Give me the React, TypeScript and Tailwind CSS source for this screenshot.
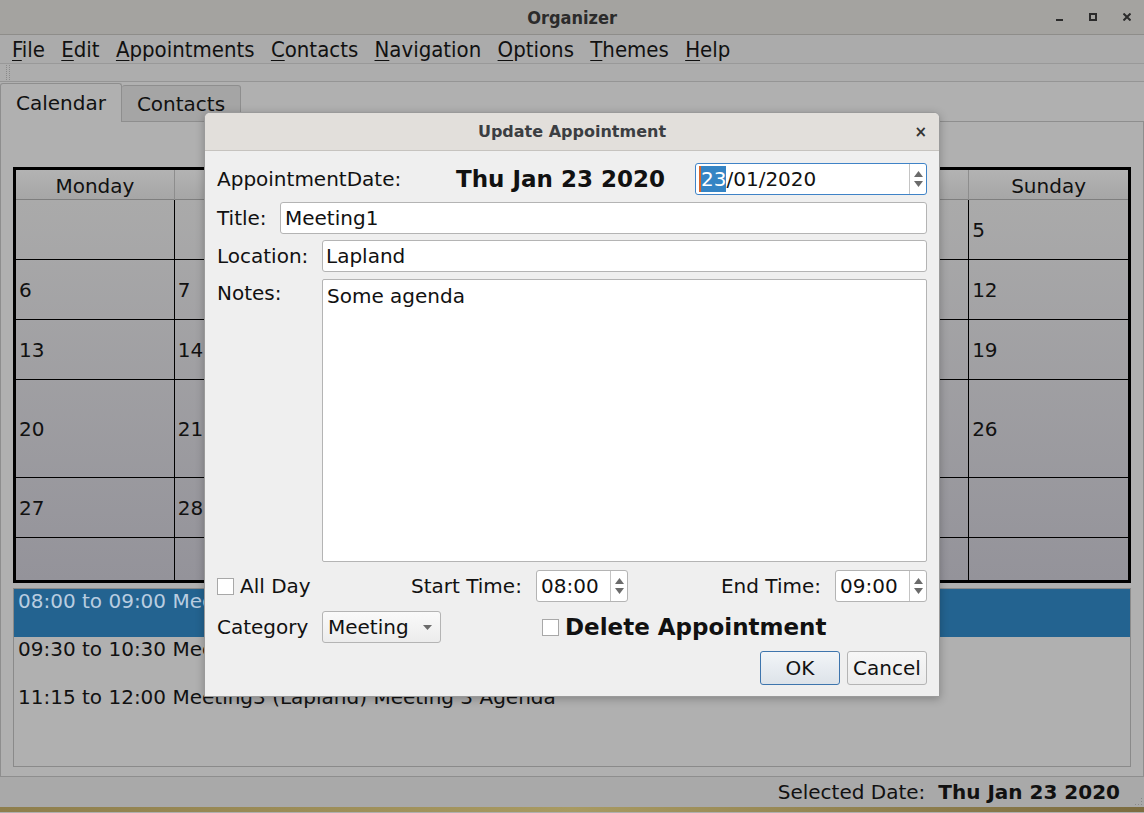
const days = ["Monday", "Tuesday", "Wednesday", "Thursday", "Friday", "Saturday", "Sunday"];

const weeks: (number | null)[][] = [
  [null, null, 1, 2, 3, 4, 5],
  [6, 7, 8, 9, 10, 11, 12],
  [13, 14, 15, 16, 17, 18, 19],
  [20, 21, 22, 23, 24, 25, 26],
  [27, 28, 29, 30, 31, null, null],
  [null, null, null, null, null, null, null],
];

const rowHeights = ["h-[60px]", "h-[60px]", "h-[60px]", "h-[98px]", "h-[60px]", "h-[42px]"];

const menus = [
  ["F", "ile"],
  ["E", "dit"],
  ["A", "ppointments"],
  ["C", "ontacts"],
  ["N", "avigation"],
  ["O", "ptions"],
  ["T", "hemes"],
  ["H", "elp"],
];

const appointments = [
  "08:00 to 09:00 Meeting1 (Lapland) Some agenda",
  "09:30 to 10:30 Meeting2 (Lapland) Meeting 2 Agenda",
  "11:15 to 12:00 Meeting3 (Lapland) Meeting 3 Agenda",
];

function SpinArrows() {
  return (
    <div className="flex w-[17px] flex-col items-center justify-center gap-[4px] border-l border-[#c4c4c4]">
      <svg width="9" height="6" viewBox="0 0 9 6">
        <path d="M0 6 L4.5 0 L9 6 Z" fill="#6b6b6b" />
      </svg>
      <svg width="9" height="6" viewBox="0 0 9 6">
        <path d="M0 0 L4.5 6 L9 0 Z" fill="#6b6b6b" />
      </svg>
    </div>
  );
}

function CheckBox() {
  return <div className="h-[17px] w-[17px] border border-[#a8a8a8] bg-white" />;
}

function Dialog() {
  return (
    <div className="absolute left-[204px] top-[112px] flex h-[585px] w-[736px] flex-col overflow-hidden rounded-t-[6px] border border-[#9a9a9a] bg-[#efefef] shadow-[0_2px_8px_rgba(0,0,0,0.25)]">
      <div className="relative flex h-[38px] shrink-0 items-center justify-center border-b border-[#c6c3bf] bg-[#e2dfdb]">
        <span className="text-[16px] font-bold text-[#3b3e42]">Update Appointment</span>
        <span className="absolute right-[12px] top-[8px] text-[15px] font-bold text-[#333]">×</span>
      </div>

      <div className="flex flex-1 flex-col px-[12px] pt-[12px] text-[20px] text-[#111]">
        <div className="flex h-[32px] items-center">
          <span className="w-[239px]">AppointmentDate:</span>
          <span className="w-[239px] text-[23px] font-bold">Thu Jan 23 2020</span>
          <div className="flex h-[32px] flex-1 rounded-[3px] border border-[#3f83c7] bg-white">
            <div className="flex flex-1 items-center pl-[3px]">
              <span className="border-l-2 border-[#d9652b] bg-[#3584c4] leading-[26px] text-white">23</span>
              <span>/01/2020</span>
            </div>
            <SpinArrows />
          </div>
        </div>

        <div className="mt-[6px] flex h-[33px] items-center">
          <span className="w-[63px]">Title:</span>
          <div className="flex h-[32px] flex-1 items-center rounded-[3px] border border-[#b4b4b4] bg-white pl-[4px]">Meeting1</div>
        </div>

        <div className="mt-[6px] flex h-[32px] items-center">
          <span className="w-[105px]">Location:</span>
          <div className="flex h-[32px] flex-1 items-center rounded-[3px] border border-[#b4b4b4] bg-white pl-[3px]">Lapland</div>
        </div>

        <div className="mt-[7px] flex">
          <span className="w-[105px] pt-[1px] leading-[26px]">Notes:</span>
          <div className="h-[283px] flex-1 rounded-[2px] border border-[#b4b4b4] bg-white px-[4px] pt-[3px] leading-[26px]">Some agenda</div>
        </div>

        <div className="mt-[8px] flex h-[32px] items-center">
          <div className="flex w-[194px] items-center gap-[6px]">
            <CheckBox />
            <span>All Day</span>
          </div>
          <span className="w-[125px]">Start Time:</span>
          <div className="flex h-[32px] w-[92px] rounded-[3px] border border-[#b4b4b4] bg-white">
            <span className="flex flex-1 items-center pl-[4px]">08:00</span>
            <SpinArrows />
          </div>
          <span className="ml-auto mr-[14px]">End Time:</span>
          <div className="flex h-[32px] w-[92px] rounded-[3px] border border-[#b4b4b4] bg-white">
            <span className="flex flex-1 items-center pl-[4px]">09:00</span>
            <SpinArrows />
          </div>
        </div>

        <div className="mt-[9px] flex h-[32px] items-center">
          <span className="w-[105px]">Category</span>
          <div className="flex h-[32px] w-[119px] items-center justify-between rounded-[3px] border border-[#b4b4b4] bg-gradient-to-b from-[#fafafa] to-[#ececec] pl-[5px] pr-[8px]">
            <span>Meeting</span>
            <svg width="9" height="5" viewBox="0 0 9 5">
              <path d="M0 0 L4.5 5 L9 0 Z" fill="#6b6b6b" />
            </svg>
          </div>
          <div className="ml-[101px] flex items-center gap-[6px]">
            <CheckBox />
            <span className="text-[23px] font-bold">Delete Appointment</span>
          </div>
        </div>

        <div className="mt-[8px] flex justify-end gap-[7px]">
          <div className="flex h-[34px] w-[80px] items-center justify-center rounded-[3px] border border-[#3e75ad] bg-gradient-to-b from-[#f2f5f8] to-[#dde3e9]">OK</div>
          <div className="flex h-[34px] w-[80px] items-center justify-center rounded-[3px] border border-[#b4b4b4] bg-gradient-to-b from-[#f7f7f7] to-[#ececec]">Cancel</div>
        </div>
      </div>
    </div>
  );
}

export default function App() {
  return (
    <div className="relative flex h-[813px] w-[1144px] flex-col overflow-hidden bg-[#b0b0b0] font-['DejaVu_Sans',sans-serif] text-[20px] text-[#111]">
      {/* window title */}
      <div className="relative flex h-[35px] shrink-0 items-center justify-center border-b border-[#8e8d8a] bg-[#a4a3a0]">
        <span className="pt-[1px] font-['DejaVu_Sans_Condensed','DejaVu_Sans',sans-serif] text-[18px] font-bold text-[#2b2b2b]">Organizer</span>
        <div className="absolute right-[13px] top-[13px] flex items-start gap-[26px]">
          <div className="mt-[6px] h-[2px] w-[7px] bg-[#2b2b2b]" />
          <div className="h-[8px] w-[8px] border-2 border-[#2b2b2b]" />
          <svg width="8" height="8" viewBox="0 0 8 8">
            <path d="M0.5 0.5 L7.5 7.5 M7.5 0.5 L0.5 7.5" stroke="#2b2b2b" strokeWidth="2" />
          </svg>
        </div>
      </div>

      {/* menu bar */}
      <div className="flex h-[29px] shrink-0 items-center gap-[16.3px] border-b border-[#999] bg-[#ababab] pl-[12px] font-['DejaVu_Sans_Condensed','DejaVu_Sans',sans-serif] text-[22px]">
        {menus.map(([k, rest]) => (
          <span key={k + rest}>
            <span className="underline decoration-1 underline-offset-[3px]">{k}</span>
            {rest}
          </span>
        ))}
      </div>

      {/* toolbar */}
      <div className="flex h-[18px] shrink-0 items-center gap-[2px] border-b border-[#959595] bg-[#adadad] pl-[6px]">
        <div className="h-[15px] w-[1px] border-l border-dotted border-[#8a8a8a]" />
        <div className="h-[15px] w-[1px] border-l border-dotted border-[#8a8a8a]" />
      </div>

      {/* tabs */}
      <div className="flex h-[40px] shrink-0 items-end pt-[2px]">
        <div className="flex h-[39px] w-[122px] items-center justify-center rounded-t-[3px] border border-b-0 border-[#8e8e8e] bg-[#b0b0b0]">Calendar</div>
        <div className="flex h-[37px] w-[119px] items-center justify-center rounded-t-[3px] border border-l-0 border-[#8e8e8e] bg-[#a5a5a5]">Contacts</div>
        <div className="h-[1px] flex-1 bg-[#8e8e8e]" />
      </div>

      {/* tab page */}
      <div className="flex h-[655px] shrink-0 flex-col border-x border-b border-[#8e8e8e] px-[12px] pt-[45px]">
        <div className="flex flex-col border-[3px] border-black">
          <div className="grid h-[30px] grid-cols-7 border-b border-[#7e7e7e] bg-gradient-to-b from-[#b3b3b3] to-[#a6a6a6]">
            {days.map((d, i) => (
              <div key={d} className={`flex items-center justify-center pt-[1px] ${i < 6 ? "border-r border-[#8d8d8d]" : ""}`}>
                {d}
              </div>
            ))}
          </div>
          <div className="bg-gradient-to-b from-[#aaaaaa] to-[#94939a]">
            {weeks.map((w, r) => (
              <div key={r} className={`grid grid-cols-7 ${rowHeights[r]} ${r < 5 ? "border-b border-black" : ""}`}>
                {w.map((n, c) => (
                  <div key={c} className={`flex items-center pl-[3px] ${c < 6 ? "border-r border-black" : ""}`}>
                    {n ?? ""}
                  </div>
                ))}
              </div>
            ))}
          </div>
        </div>

        <div className="mt-[5px] h-[179px] border border-[#8a8a8a] bg-[#b0b0b0]">
          {appointments.map((a, i) => (
            <div key={a} className={`h-[48px] pl-[4px] leading-[24px] ${i === 0 ? "bg-[#236390] text-[#b9cde0]" : ""}`}>
              {a}
            </div>
          ))}
        </div>
      </div>

      {/* status bar */}
      <div className="relative flex h-[30px] shrink-0 items-center justify-end bg-[#a9a9a9] pr-[24px]">
        <span>Selected Date:</span>
        <span className="ml-[13px] font-bold">Thu Jan 23 2020</span>
        <div className="absolute bottom-[2px] right-[2px] grid grid-cols-3 gap-[2px]">
          {Array.from({ length: 9 }).map((_, i) => (
            <div key={i} className={`h-[1px] w-[1px] ${i === 2 || i > 4 ? "bg-[#888]" : ""}`} />
          ))}
        </div>
      </div>

      {/* desktop behind */}
      <div className="h-[5px] shrink-0 bg-gradient-to-r from-[#8e7e4c] via-[#a89a62] to-[#7c6c40]" />

      <Dialog />
    </div>
  );
}
